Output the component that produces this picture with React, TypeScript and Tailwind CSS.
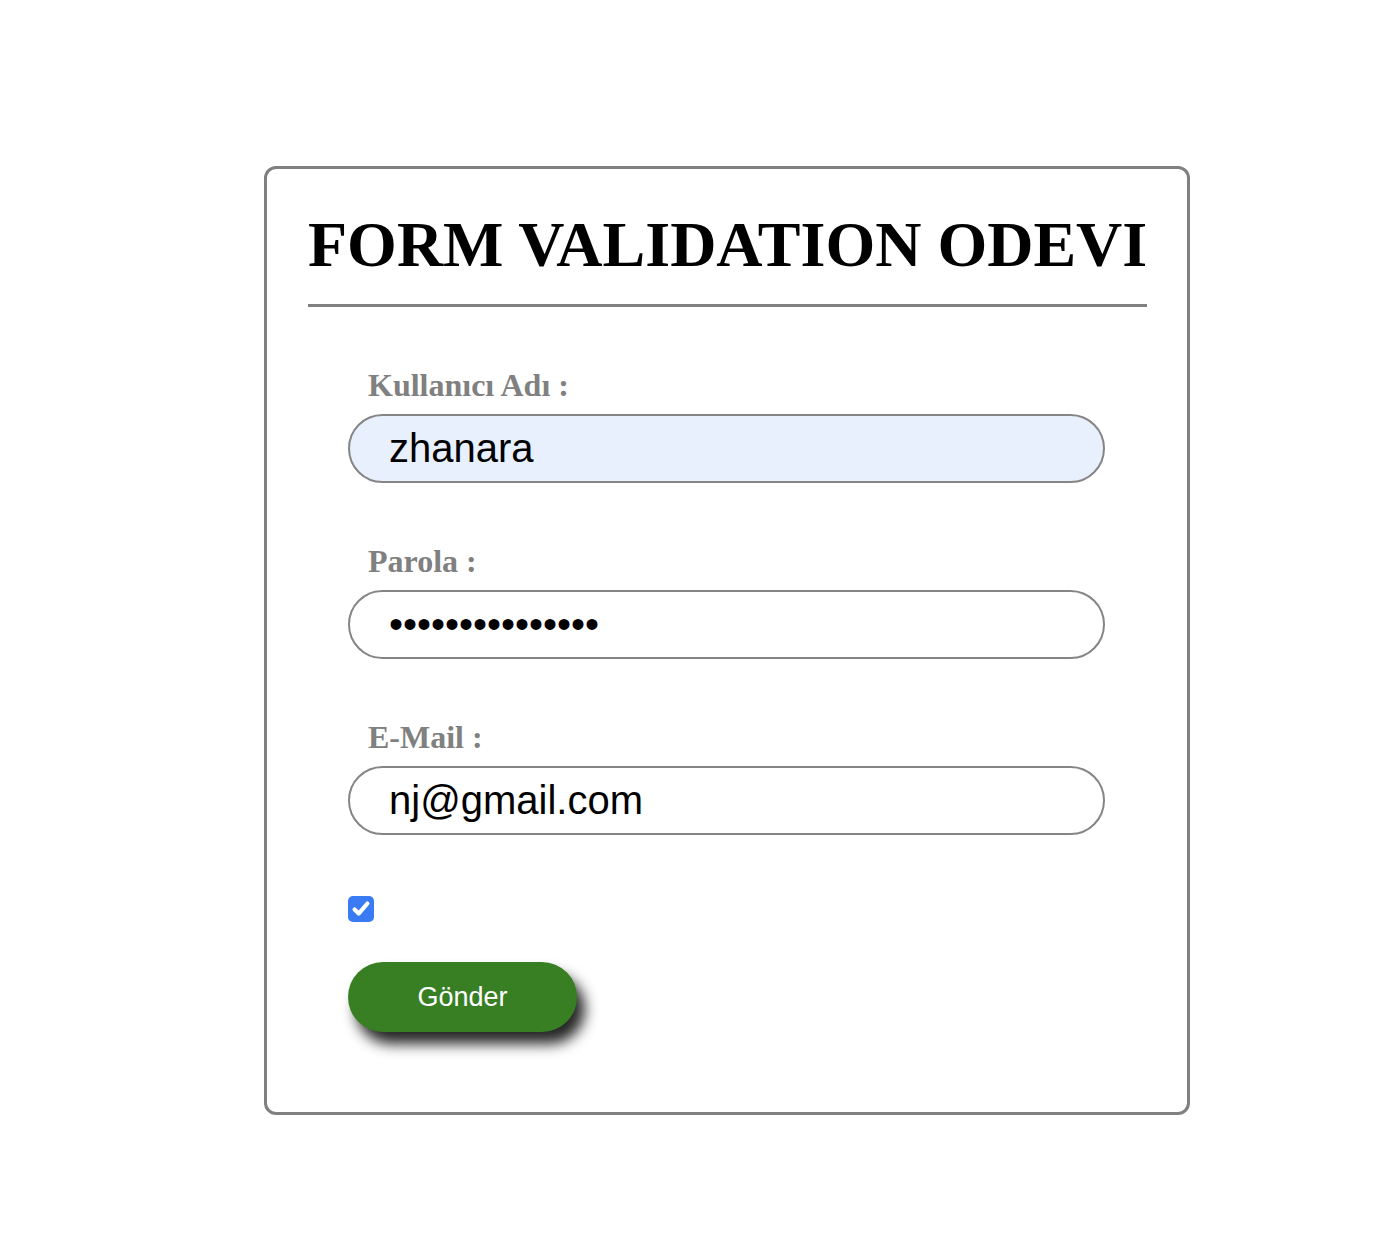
import React from 'react';

const labelCls =
  "block ml-[20px] h-[30px] leading-[30px] text-[32px] font-bold text-[#808080] [font-family:'Liberation_Serif',serif]";
const inputCls =
  "block w-[757px] h-[69px] rounded-full border-2 border-[#858585] pl-[39px] pr-4 outline-none text-black text-[40px] [font-family:'Liberation_Sans',Arial,sans-serif]";

const App: React.FC = () => {
  return (
    <div className="min-h-[1238px] bg-white pt-[166px] pl-[264px]">
      <div className="w-fit rounded-[12px] border-[3px] border-[#808080] pl-[41px] pr-[40px] pt-[44px] pb-[80px]">
        <h1 className="text-[64px] leading-[64px] font-bold text-black whitespace-nowrap [font-family:'Liberation_Serif',serif]">
          FORM VALIDATION ODEVI
        </h1>
        <div className="mt-[27px] h-[3px] bg-[#808080]" />

        {/* form */}
        <form className="px-[40px] pt-[63px]" onSubmit={(e) => e.preventDefault()}>
          <label className={labelCls}>Kullanıcı Adı :</label>
          <input className={`${inputCls} mt-[14px] bg-[#e8f0fe]`} defaultValue="zhanara" />

          <label className={`${labelCls} mt-[63px]`}>Parola :</label>
          <input className={`${inputCls} mt-[14px] bg-white`} type="password" defaultValue="123456789012345" />

          <label className={`${labelCls} mt-[63px]`}>E-Mail :</label>
          <input className={`${inputCls} mt-[14px] bg-white`} defaultValue="nj@gmail.com" />

          <div className="mt-[61px] flex h-[26px] w-[26px] items-center justify-center rounded-[5px] bg-[#3a7bf4]">
            <svg viewBox="0 0 24 24" className="h-[22px] w-[22px]" fill="none" stroke="white" strokeWidth="4.5" strokeLinecap="round" strokeLinejoin="round">
              <path d="M5 12.5l4.5 4.5L19 6" />
            </svg>
          </div>

          <button
            type="submit"
            className="mt-[40px] block h-[70px] w-[229px] rounded-full bg-[#387f24] text-[27px] text-white shadow-[8px_12px_14px_rgba(0,0,0,0.85)] [font-family:'Liberation_Sans',Arial,sans-serif]"
          >
            Gönder
          </button>
        </form>
      </div>
    </div>
  );
};

export default App;
